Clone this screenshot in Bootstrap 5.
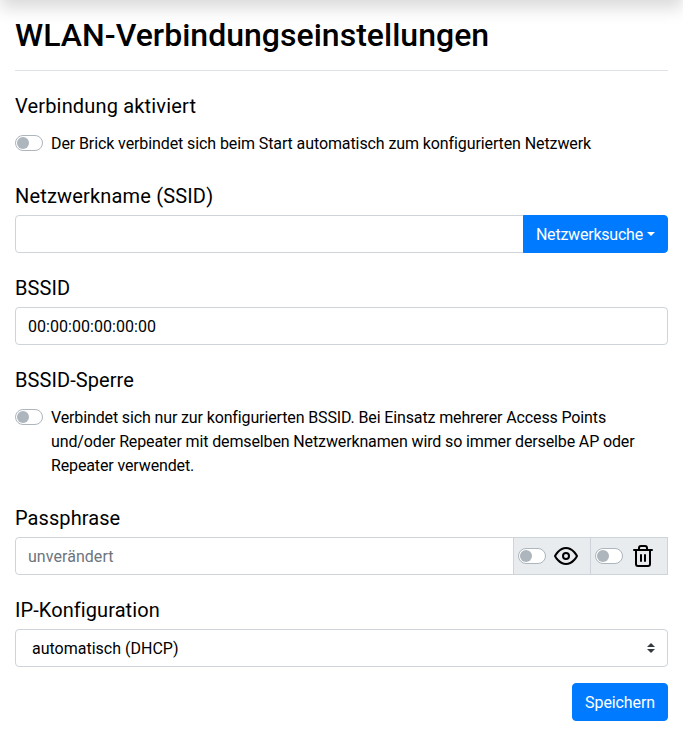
<!DOCTYPE html>
<html lang="de">
<head>
<meta charset="utf-8">
<meta name="viewport" content="width=device-width, initial-scale=1">
<title>WLAN-Verbindungseinstellungen</title>
<link rel="stylesheet" href="https://cdn.jsdelivr.net/npm/bootstrap@5.3.0/dist/css/bootstrap.min.css">
<style>
  body { font-family: Roboto, sans-serif; color: #000; background: #fff; overflow: hidden; }
  .topbar { height: 56px; margin-top: -56px; box-shadow: 0 .5rem 1rem rgba(0,0,0,.15); }
  .page { padding: 16px 15px; }
  .page-title { font-size: 32px; padding-bottom: 16px; margin-bottom: 16px; border-bottom: 1px solid #dee2e6; letter-spacing: .02px; }
  .field-label { display: block; font-size: 20px; line-height: 30px; padding: 4px 0; margin: 0; letter-spacing: .08px; }
  .field-label.wide { letter-spacing: .17px; }
  .toggle-row { padding: 7px 0 5px; letter-spacing: -.1px; }
  .toggle-row.dense { letter-spacing: -.13px; }
  .form-control, .form-select { border-color: #ced4da; border-radius: 4px; color: #000; padding-top: 7px; padding-bottom: 5px; }
  .form-control { letter-spacing: .05px; }
  .form-control::placeholder { color: #6c757d; }
  .form-select {
    padding-left: 16px;
    background-image: url("data:image/svg+xml,%3csvg xmlns='http://www.w3.org/2000/svg' viewBox='0 0 4 5'%3e%3cpath fill='%23343a40' d='M2 0L0 2h4zm0 5L0 3h4z'/%3e%3c/svg%3e");
    background-size: 8px 10px;
  }
  .btn-primary { --bs-btn-bg: #007bff; --bs-btn-border-color: #007bff; --bs-btn-border-radius: 4px; border-radius: 4px; padding-top: 7px; padding-bottom: 5px; letter-spacing: -.1px; }
  .btn-primary.dropdown-toggle { letter-spacing: -.22px; }
  .form-switch .form-check-input, .addon .form-check-input {
    float: none; flex: none; width: 28px; height: 16px; margin: 0; border: 1px solid #adb5bd; border-radius: 8px; background-color: #fff;
    background-image: url("data:image/svg+xml,%3csvg xmlns='http://www.w3.org/2000/svg' viewBox='-7 -7 14 14'%3e%3ccircle r='6' fill='%23adb5bd'/%3e%3c/svg%3e");
    background-position: left center; background-size: contain; background-repeat: no-repeat;
  }
  .toggle-row .form-check-input { margin-top: 3px; }
  .addon { padding: 0 12px 0 4px; background: #e9ecef; border-color: #ced4da; border-radius: 0; }
</style>
<script src="https://cdn.jsdelivr.net/npm/bootstrap@5.3.0/dist/js/bootstrap.bundle.min.js"></script>
</head>
<body>
<header class="topbar"></header>
<main class="page">
  <h1 class="page-title fw-medium">WLAN-Verbindungseinstellungen</h1>
  <form>
    <div class="mb-3">
      <label class="field-label wide" for="enable">Verbindung aktiviert</label>
      <div class="form-switch toggle-row d-flex gap-2">
        <input class="form-check-input" type="checkbox" id="enable">
        <label for="enable">Der Brick verbindet sich beim Start automatisch zum konfigurierten Netzwerk</label>
      </div>
    </div>
    <div class="mb-3">
      <label class="field-label wide" for="ssid">Netzwerkname (SSID)</label>
      <div class="input-group">
        <input class="form-control" type="text" id="ssid">
        <button class="btn btn-primary dropdown-toggle" type="button" data-bs-toggle="dropdown">Netzwerksuche</button>
      </div>
    </div>
    <div class="mb-3">
      <label class="field-label" for="bssid">BSSID</label>
      <input class="form-control" type="text" id="bssid" value="00:00:00:00:00:00">
    </div>
    <div class="mb-3">
      <label class="field-label" for="lock">BSSID-Sperre</label>
      <div class="form-switch toggle-row dense d-flex gap-2">
        <input class="form-check-input" type="checkbox" id="lock">
        <label for="lock">Verbindet sich nur zur konfigurierten BSSID. Bei Einsatz mehrerer Access Points und/oder Repeater mit demselben Netzwerknamen wird so immer derselbe AP oder Repeater verwendet.</label>
      </div>
    </div>
    <div class="mb-3">
      <label class="field-label" for="pass">Passphrase</label>
      <div class="input-group">
        <input class="form-control" type="password" id="pass" placeholder="unverändert">
        <label class="input-group-text addon gap-2">
          <input class="form-check-input" type="checkbox">
          <svg width="24" height="24" viewBox="0 0 24 24" fill="none" stroke="#000" stroke-width="2" stroke-linecap="round" stroke-linejoin="round"><path d="M1 12s4-8 11-8 11 8 11 8-4 8-11 8-11-8-11-8z"/><circle cx="12" cy="12" r="3"/></svg>
        </label>
        <label class="input-group-text addon gap-2">
          <input class="form-check-input" type="checkbox">
          <svg width="24" height="24" viewBox="0 0 24 24" fill="none" stroke="#000" stroke-width="2" stroke-linecap="round" stroke-linejoin="round"><path d="M3 6h18M19 6v14a2 2 0 0 1-2 2H7a2 2 0 0 1-2-2V6m3 0V4a2 2 0 0 1 2-2h4a2 2 0 0 1 2 2v2M10 11v6M14 11v6"/></svg>
        </label>
      </div>
    </div>
    <div class="mb-3">
      <label class="field-label" for="ip">IP-Konfiguration</label>
      <select class="form-select" id="ip"><option>automatisch (DHCP)</option></select>
    </div>
    <div class="d-flex justify-content-end">
      <button class="btn btn-primary" type="button">Speichern</button>
    </div>
  </form>
</main>
</body>
</html>
